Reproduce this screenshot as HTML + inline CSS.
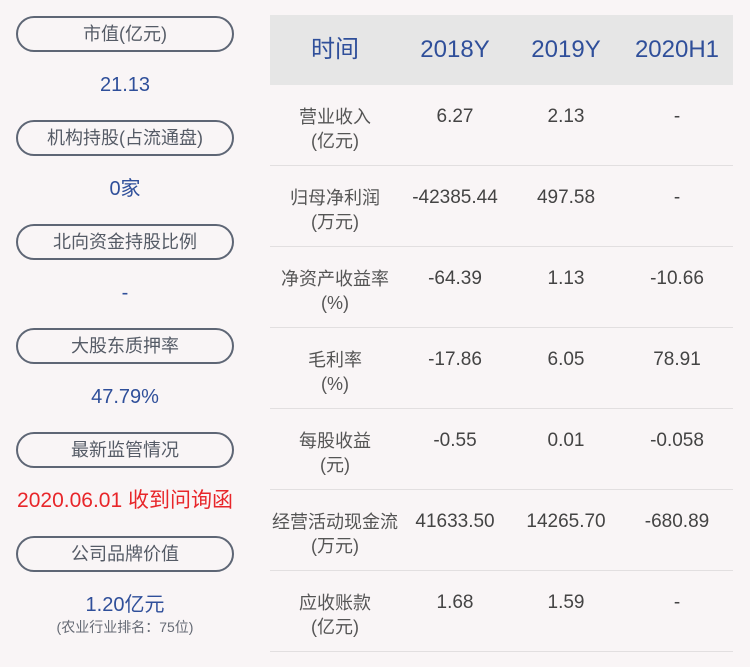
<!DOCTYPE html>
<html><head><meta charset="utf-8"><style>
*{margin:0;padding:0;box-sizing:border-box}
body{width:750px;height:667px;background:#f9f5f6;font-family:"Liberation Sans","Noto Sans CJK SC",sans-serif;position:relative;overflow:hidden}
.pill{position:absolute;left:16px;width:218px;height:36px;border:2px solid #5e6675;border-radius:18px;text-align:center;line-height:32px;font-size:18px;color:#555b66}
.val{position:absolute;left:0;width:250px;text-align:center;font-size:20px;color:#2f4f9a;line-height:24px}
.hdr{position:absolute;left:270px;top:15px;width:463px;height:70px;background:#e6e6e6}
.h{position:absolute;top:15px;height:70px;line-height:70px;font-size:24px;color:#2f4f9a;text-align:center;width:120px}
.row{position:absolute;left:270px;width:463px;height:81px;border-bottom:1px solid #e2dfe0}
.c{position:absolute;top:20px;text-align:center;font-size:19px;color:#444;line-height:24px;width:120px}
.lab{position:absolute;top:20px;left:-5px;width:140px;text-align:center;font-size:18px;color:#555;line-height:24px}
</style></head><body>
<div class="pill" style="top:16px">市值(亿元)</div>
<div class="val" style="top:73px">21.13</div>
<div class="pill" style="top:120px">机构持股(占流通盘)</div>
<div class="val" style="top:177px">0家</div>
<div class="pill" style="top:224px">北向资金持股比例</div>
<div class="val" style="top:281px">-</div>
<div class="pill" style="top:328px">大股东质押率</div>
<div class="val" style="top:385px">47.79%</div>
<div class="pill" style="top:432px">最新监管情况</div>
<div class="val" style="top:489px;color:#e8262a;font-size:21px">2020.06.01 收到问询函</div>
<div class="pill" style="top:536px">公司品牌价值</div>
<div class="val" style="top:593px">1.20亿元</div>
<div class="val" style="top:618px;font-size:14px;color:#666b75;line-height:18px">(农业行业排名：75位)</div>

<div class="hdr"></div>
<div class="h" style="left:275px">时间</div>
<div class="h" style="left:395px">2018Y</div>
<div class="h" style="left:506px">2019Y</div>
<div class="h" style="left:617px">2020H1</div>

<div class="row" style="top:85px"><div class="lab">营业收入<br>(亿元)</div><div class="c" style="left:125px">6.27</div><div class="c" style="left:236px">2.13</div><div class="c" style="left:347px">-</div></div>
<div class="row" style="top:166px"><div class="lab">归母净利润<br>(万元)</div><div class="c" style="left:125px">-42385.44</div><div class="c" style="left:236px">497.58</div><div class="c" style="left:347px">-</div></div>
<div class="row" style="top:247px"><div class="lab">净资产收益率<br>(%)</div><div class="c" style="left:125px">-64.39</div><div class="c" style="left:236px">1.13</div><div class="c" style="left:347px">-10.66</div></div>
<div class="row" style="top:328px"><div class="lab">毛利率<br>(%)</div><div class="c" style="left:125px">-17.86</div><div class="c" style="left:236px">6.05</div><div class="c" style="left:347px">78.91</div></div>
<div class="row" style="top:409px"><div class="lab">每股收益<br>(元)</div><div class="c" style="left:125px">-0.55</div><div class="c" style="left:236px">0.01</div><div class="c" style="left:347px">-0.058</div></div>
<div class="row" style="top:490px"><div class="lab">经营活动现金流<br>(万元)</div><div class="c" style="left:125px">41633.50</div><div class="c" style="left:236px">14265.70</div><div class="c" style="left:347px">-680.89</div></div>
<div class="row" style="top:571px"><div class="lab">应收账款<br>(亿元)</div><div class="c" style="left:125px">1.68</div><div class="c" style="left:236px">1.59</div><div class="c" style="left:347px">-</div></div>
</body></html>
